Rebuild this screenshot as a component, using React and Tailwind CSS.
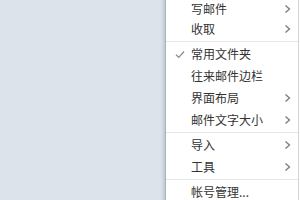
import React from 'react';

const items = [
    { label: '写邮件', arrow: true },
    { label: '收取', arrow: true },
    { sep: true },
    { label: '常用文件夹', checked: true },
    { label: '往来邮件边栏' },
    { label: '界面布局', arrow: true },
    { label: '邮件文字大小', arrow: true },
    { sep: true },
    { label: '导入', arrow: true },
    { label: '工具', arrow: true },
    { sep: true },
    { label: '帐号管理...' },
];

const Chevron = () => (
    <svg width="7" height="10" viewBox="0 0 7 10" className="shrink-0">
        <path d="M1.5 1.5 L5.5 5 L1.5 8.5" fill="none" stroke="#7a7a7a" strokeWidth="1.3" />
    </svg>
);

const Check = () => (
    <svg width="10" height="9" viewBox="0 0 10 9">
        <path d="M1 4.8 L3.8 7.5 L9 1.5" fill="none" stroke="#8a8a8a" strokeWidth="1.2" />
    </svg>
);

const App = () => {
    return (
        <div
            className="flex w-[300px] h-[200px] overflow-hidden bg-[#dce3eb]"
            style={{ fontFamily: '"Noto Sans CJK SC", "Noto Sans", sans-serif' }}
        >
            <div className="flex-1" />
            <div className="w-[134px] h-[220px] -mt-[4px] bg-white border-l border-r border-l-[#a9b1ba] border-r-[#d4d4d4] shadow-[-2px_0_3px_rgba(0,0,0,0.12)] flex flex-col">
                {items.map((item, i) =>
                    item.sep ? (
                        <div key={i} className="h-[3px] flex items-center">
                            <div className="w-full h-px bg-[#e6e6e6]" />
                        </div>
                    ) : (
                        <div
                            key={i}
                            className={`h-[22px] flex items-center pr-[7px] text-[12px] text-[#333] ${i === 0 ? 'pt-[4px]' : ''}`}
                        >
                            <div className="w-[25px] flex justify-center pl-[3px]">
                                {item.checked && <Check />}
                            </div>
                            <span className="flex-1 leading-none">{item.label}</span>
                            {item.arrow && <Chevron />}
                        </div>
                    )
                )}
            </div>
            <div className="w-px bg-white" />
        </div>
    );
};

export default App;
